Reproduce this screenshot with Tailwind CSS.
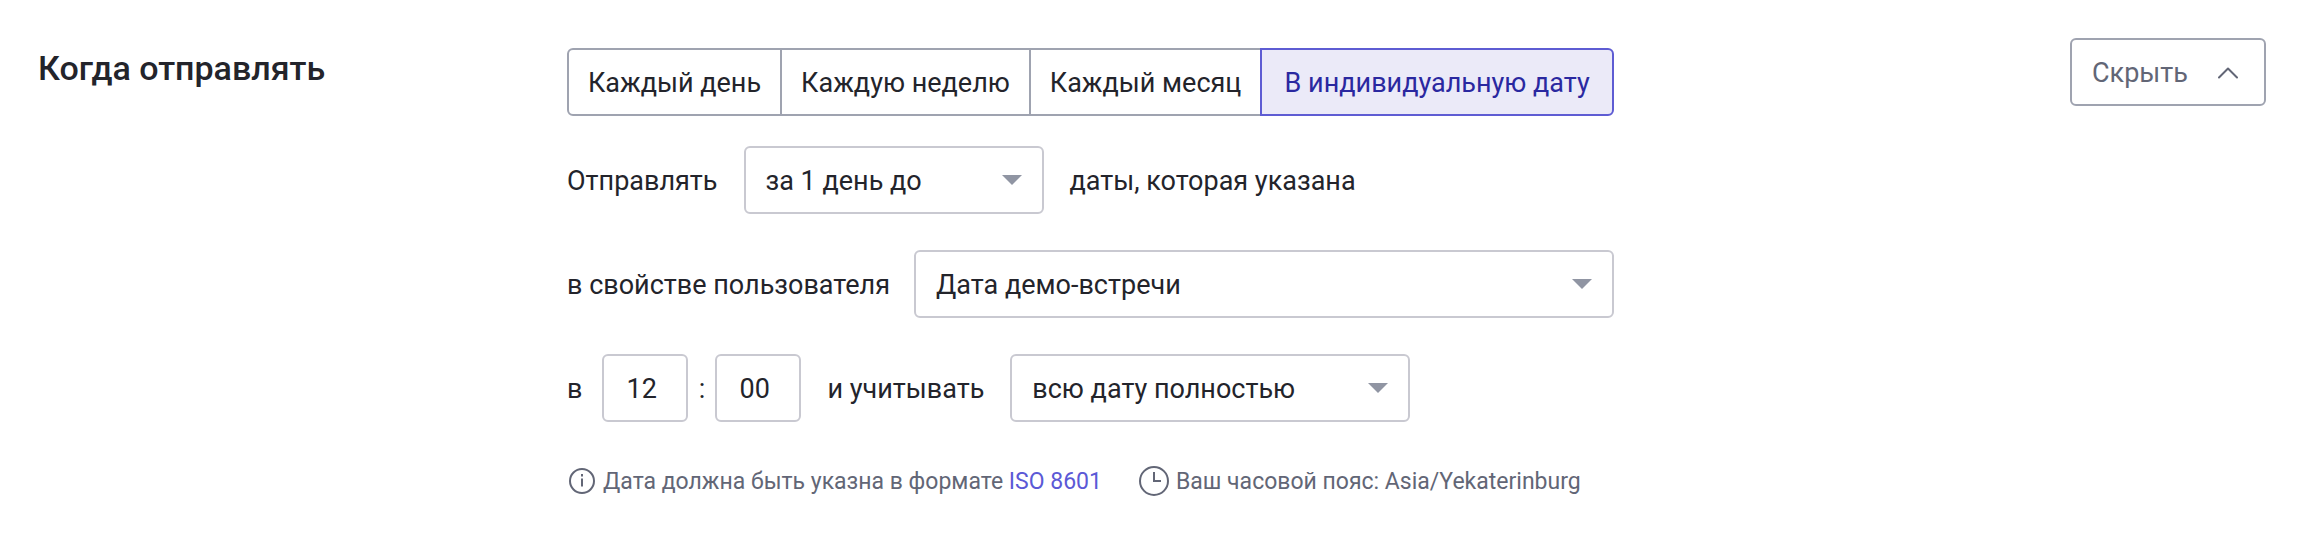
<!DOCTYPE html>
<html lang="ru">
<head>
<meta charset="utf-8">
<meta name="viewport" content="width=device-width, initial-scale=1">
<title>Когда отправлять</title>
<script src="https://cdn.jsdelivr.net/npm/@tailwindcss/browser@4"></script>
</head>
<body class="bg-white font-['Roboto',sans-serif] text-[27px] leading-8 text-[#23242b]">
<section class="grid grid-cols-[minmax(300px,529px)_1fr_auto] items-start pt-[38px] pr-10 pb-10 pl-[38px]">
  <h2 class="mt-1.5 text-[34px] leading-12 font-medium">Когда отправлять</h2>

  <form class="mt-2.5 max-w-[1047px]">
    <div class="flex" role="group" aria-label="Периодичность">
      <button type="button" class="h-[68px] rounded-l-md border-2 border-[#9fa3b0] px-[19px] pt-0.5 whitespace-nowrap">Каждый день</button>
      <button type="button" class="-ml-0.5 h-[68px] border-2 border-[#9fa3b0] px-[19px] pt-0.5 whitespace-nowrap">Каждую неделю</button>
      <button type="button" class="-ml-0.5 h-[68px] border-2 border-[#9fa3b0] px-[19px] pt-0.5 whitespace-nowrap">Каждый месяц</button>
      <button type="button" aria-pressed="true" class="-ml-0.5 h-[68px] flex-1 rounded-r-md border-2 border-[#5e5cd3] bg-[#ebeaf8] px-[19px] pt-0.5 whitespace-nowrap text-[#2a28a0]">В индивидуальную дату</button>
    </div>

    <div class="mt-[30px] flex items-center gap-[26px]">
      <label for="offset" class="pt-0.5">Отправлять</label>
      <div class="relative w-[300px]">
        <select id="offset" class="h-[68px] w-full appearance-none rounded-md border-2 border-[#c9c9d1] bg-white pt-0.5 pl-5"><option>за 1 день до</option></select>
        <svg class="pointer-events-none absolute top-[29px] right-[22px] h-2.5 w-5" viewBox="0 0 20 10" fill="#9095a3" aria-hidden="true"><path d="M0 0h20L10 10z"/></svg>
      </div>
      <span class="pt-0.5">даты, которая указана</span>
    </div>

    <div class="mt-9 flex items-center gap-6">
      <label for="property" class="pt-0.5">в свойстве пользователя</label>
      <div class="relative flex-1">
        <select id="property" class="h-[68px] w-full appearance-none rounded-md border-2 border-[#c9c9d1] bg-white pt-0.5 pl-5"><option>Дата демо-встречи</option></select>
        <svg class="pointer-events-none absolute top-[29px] right-[22px] h-2.5 w-5" viewBox="0 0 20 10" fill="#9095a3" aria-hidden="true"><path d="M0 0h20L10 10z"/></svg>
      </div>
    </div>

    <div class="mt-9 flex items-center gap-[26px]">
      <div class="flex items-center">
        <label for="hours" class="mr-5 pt-0.5">в</label>
        <input id="hours" type="text" inputmode="numeric" value="12" class="h-[68px] w-[86px] rounded-md border-2 border-[#c9c9d1] pt-0.5 pl-[22px]">
        <span class="w-[27px] pt-0.5 text-center">:</span>
        <input type="text" inputmode="numeric" value="00" aria-label="Минуты" class="h-[68px] w-[86px] rounded-md border-2 border-[#c9c9d1] pt-0.5 pl-[22px]">
      </div>
      <label for="scope" class="pt-0.5">и учитывать</label>
      <div class="relative w-[400px]">
        <select id="scope" class="h-[68px] w-full appearance-none rounded-md border-2 border-[#c9c9d1] bg-white pt-0.5 pl-5"><option>всю дату полностью</option></select>
        <svg class="pointer-events-none absolute top-[29px] right-[22px] h-2.5 w-5" viewBox="0 0 20 10" fill="#9095a3" aria-hidden="true"><path d="M0 0h20L10 10z"/></svg>
      </div>
    </div>

    <div class="mt-[42px] flex items-center gap-9 text-[23px] text-[#626676]">
      <p class="flex items-center gap-1.5">
        <svg class="size-[30px]" viewBox="0 0 30 30" fill="none" stroke="currentColor" stroke-width="2" aria-hidden="true"><circle cx="15" cy="15" r="12"/><path d="M15 12.500v8M15 8v2.500"/></svg>
        <span class="pt-0.5">Дата должна быть указна в формате <a href="#" class="text-[#5b59d6]">ISO 8601</a></span>
      </p>
      <p class="flex items-center gap-1.5">
        <svg class="size-8" viewBox="0 0 32 32" fill="none" stroke="currentColor" stroke-width="2" aria-hidden="true"><circle cx="16" cy="16" r="14"/><path d="M16 7v9h7"/></svg>
        <span class="pt-0.5">Ваш часовой пояс: Asia/Yekaterinburg</span>
      </p>
    </div>
  </form>

  <button type="button" class="flex h-[68px] w-[196px] items-center justify-between rounded-md border-2 border-[#9fa3b0] pt-0.5 pr-[26px] pl-5 text-[#626676]">
    Скрыть
    <svg class="h-3 w-5" viewBox="0 0 20 12" fill="none" stroke="currentColor" stroke-width="2" stroke-linecap="round" stroke-linejoin="round" aria-hidden="true"><path d="M1 10.500l9-9 9 9"/></svg>
  </button>
</section>
</body>
</html>
